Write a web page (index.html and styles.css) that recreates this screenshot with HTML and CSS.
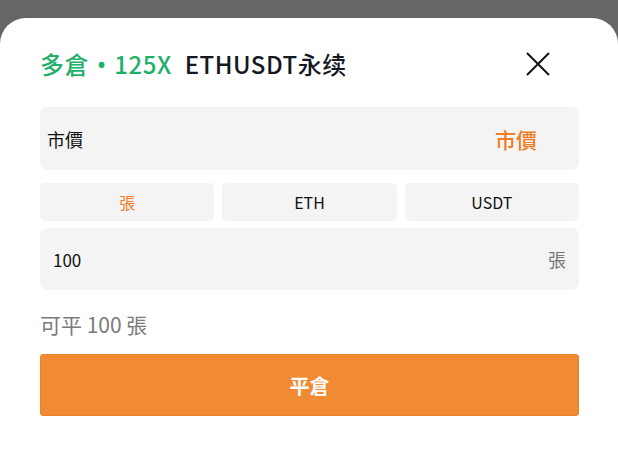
FILE: index.html
```html
<!DOCTYPE html>
<html lang="zh-Hant">
<head>
    <meta charset="UTF-8">
    <meta name="viewport" content="width=device-width, initial-scale=1.0">
    <title>平倉</title>
    <link rel="stylesheet" href="styles.css">
</head>
<body>
    <div class="sheet">
        <div class="sheet-header">
            <div class="title">
                <span class="side">多倉 <span class="dot">•</span> 125X</span>
                <span class="symbol">ETHUSDT永续</span>
            </div>
            <button class="close" type="button" aria-label="close">
                <svg width="24" height="24" viewBox="0 0 24 24">
                    <path d="M1 1 L23 23 M23 1 L1 23" stroke="#111" stroke-width="2" fill="none"/>
                </svg>
            </button>
        </div>

        <div class="price-row">
            <span class="price-label">市價</span>
            <span class="price-value">市價</span>
        </div>

        <div class="unit-tabs">
            <div class="unit-tab active">張</div>
            <div class="unit-tab">ETH</div>
            <div class="unit-tab">USDT</div>
        </div>

        <div class="amount-row">
            <span class="amount">100</span>
            <span class="amount-unit">張</span>
        </div>

        <div class="available">可平 100 張</div>

        <button class="submit" type="button">平倉</button>
    </div>
</body>
</html>
```

FILE: styles.css
```css
body {
    margin: 0;
    padding: 0;
    height: 454px;
    overflow: hidden;
    background-color: #666666;
    font-family: "Noto Sans CJK TC", "Noto Sans", sans-serif;
}
.sheet {
    margin-top: 18px;
    height: 436px;
    background-color: #fff;
    border-radius: 26px 26px 0 0;
    padding: 30px 39px 0 40px;
    box-sizing: border-box;
}
.sheet-header {
    display: flex;
    justify-content: space-between;
    align-items: center;
    height: 32px;
    margin-bottom: 27px;
}
.title {
    font-size: 24px;
    line-height: 32px;
    font-weight: 500;
    letter-spacing: 0.5px;
    display: flex;
    gap: 13px;
}
.side {
    color: #1fb16a;
    word-spacing: 2px;
}
.dot {
    font-family: "Noto Sans", sans-serif;
}
.symbol {
    color: #141820;
}
.close {
    border: none;
    background: none;
    padding: 0;
    margin-right: 29px;
    width: 24px;
    height: 24px;
    display: flex;
}
.price-row {
    display: flex;
    justify-content: space-between;
    align-items: center;
    height: 63px;
    background-color: #f4f4f4;
    border-radius: 8px;
    padding: 0 42px 0 7px;
}
.price-label {
    font-size: 18px;
    color: #111;
}
.price-value {
    font-size: 21px;
    color: #ef7e22;
    font-weight: 500;
}
.unit-tabs {
    display: flex;
    gap: 8px;
    margin-top: 13px;
}
.unit-tab {
    flex: 1;
    height: 38px;
    background-color: #f4f4f4;
    border-radius: 5px;
    display: flex;
    justify-content: center;
    align-items: center;
    font-size: 16px;
    color: #111;
}
.unit-tab.active {
    color: #ef7e22;
}
.amount-row {
    display: flex;
    justify-content: space-between;
    align-items: center;
    height: 62px;
    margin-top: 7px;
    background-color: #f4f4f4;
    border-radius: 8px;
    padding: 0 13px 0 13px;
}
.amount {
    font-size: 17px;
    color: #111;
}
.amount-unit {
    font-size: 18px;
    color: #777;
}
.available {
    margin-top: 20px;
    font-size: 21px;
    line-height: 28px;
    color: #7a7a7a;
}
.submit {
    display: block;
    width: 100%;
    height: 62px;
    margin-top: 16px;
    background-color: #f08a33;
    border: 1px solid #ee8226;
    border-radius: 3px;
    color: #fff;
    font-family: inherit;
    font-size: 20px;
    font-weight: 700;
}
```
